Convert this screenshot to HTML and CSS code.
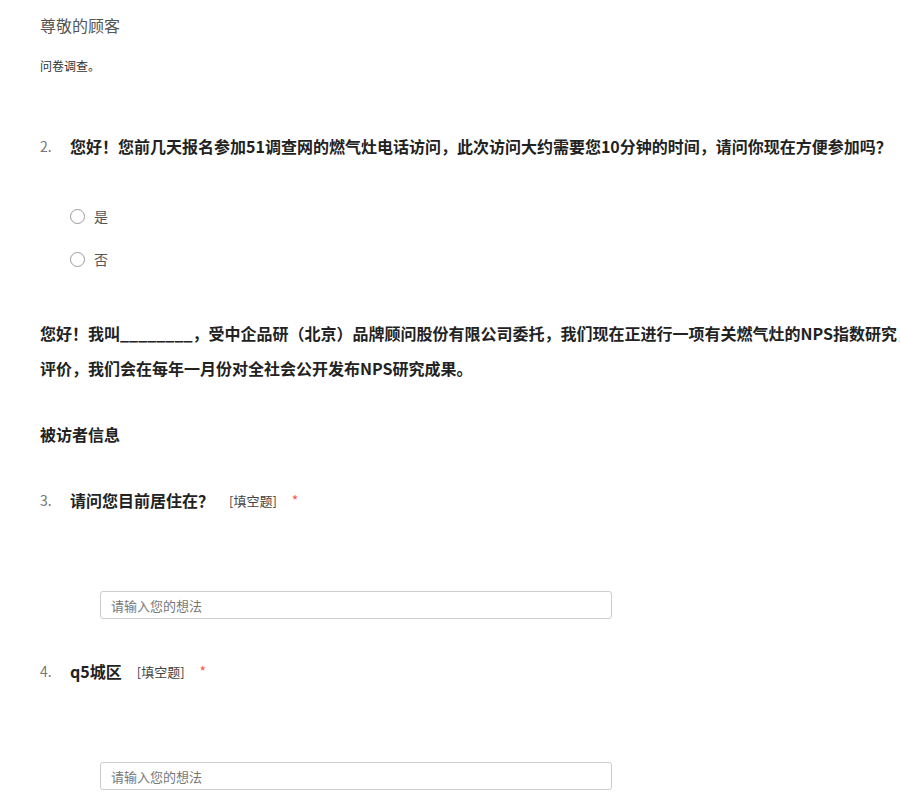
FILE: index.html
```html
<!DOCTYPE html>
<html lang="zh-CN">
<head>
<meta charset="utf-8">
<title>问卷调查</title>
<link rel="stylesheet" href="styles.css">
</head>
<body>
<div class="survey">
  <div class="greeting">尊敬的顾客</div>
  <div class="note">问卷调查。</div>

  <div class="question q2">
    <span class="num">2.</span>
    <span class="title">您好！您前几天报名参加51调查网的燃气灶电话访问，此次访问大约需要您10分钟的时间，请问你现在方便参加吗？</span>
  </div>
  <div class="options">
    <label class="option"><input type="radio" name="q2" class="radio"><span>是</span></label>
    <label class="option"><input type="radio" name="q2" class="radio"><span>否</span></label>
  </div>

  <p class="intro">您好！我叫________，受中企品研（北京）品牌顾问股份有限公司委托，我们现在正进行一项有关燃气灶的NPS指数研究，<br>评价，我们会在每年一月份对全社会公开发布NPS研究成果。</p>

  <div class="section">被访者信息</div>

  <div class="question q3">
    <span class="num">3.</span>
    <span class="title">请问您目前居住在？</span>
    <span class="tag">[填空题]</span>
    <span class="req">*</span>
  </div>
  <input type="text" class="answer" placeholder="请输入您的想法">

  <div class="question q4">
    <span class="num">4.</span>
    <span class="title">q5城区</span>
    <span class="tag">[填空题]</span>
    <span class="req">*</span>
  </div>
  <input type="text" class="answer" placeholder="请输入您的想法">
</div>
</body>
</html>
```
FILE: styles.css
```css
html, body {
  margin: 0;
  padding: 0;
  background: #fff;
  overflow: hidden;
}

body {
  font-family: "Noto Sans CJK SC", "Microsoft YaHei", "Noto Sans", sans-serif;
  color: #333;
}

.survey {
  padding: 0 0 40px 40px;
  display: flex;
  flex-direction: column;
  align-items: flex-start;
}

.greeting {
  margin-top: 13px;
  font-size: 16px;
  line-height: 24px;
  color: #555;
}

.note {
  margin-top: 20px;
  font-size: 12px;
  line-height: 18px;
  color: #333;
}

.question {
  display: flex;
  align-items: center;
  height: 24px;
  white-space: nowrap;
}

.q2 { margin-top: 59px; }
.q3 { margin-top: 42px; }
.q4 { margin-top: 40px; }

.num {
  width: 30px;
  font-size: 14px;
  color: #777;
}

.title {
  font-size: 16px;
  font-weight: bold;
  color: #222;
}

.tag {
  margin-left: 15px;
  font-size: 13px;
  color: #444;
}

.req {
  margin-left: 15px;
  font-size: 14px;
  color: #f55;
}

.options {
  margin-top: 46px;
  margin-left: 30px;
  display: flex;
  flex-direction: column;
  gap: 19px;
}

.option {
  display: flex;
  align-items: center;
  height: 24px;
  font-size: 14px;
  color: #555;
}

.radio {
  appearance: none;
  -webkit-appearance: none;
  margin: 0 9px 0 0;
  width: 15px;
  height: 15px;
  border: 1px solid #999;
  border-radius: 50%;
  background: #fff;
}

.intro {
  margin: 45px 0 0;
  font-size: 16px;
  font-weight: bold;
  line-height: 35px;
  color: #222;
  white-space: nowrap;
}

.section {
  margin-top: 36px;
  font-size: 16px;
  font-weight: bold;
  line-height: 24px;
  color: #222;
}

.answer {
  box-sizing: border-box;
  margin: 79px 0 0 60px;
  width: 512px;
  height: 28px;
  padding: 0 10px;
  border: 1px solid #ccc;
  border-radius: 3px;
  font-family: inherit;
  font-size: 13px;
  color: #333;
  outline: none;
}

.answer::placeholder {
  color: #777;
}
```
